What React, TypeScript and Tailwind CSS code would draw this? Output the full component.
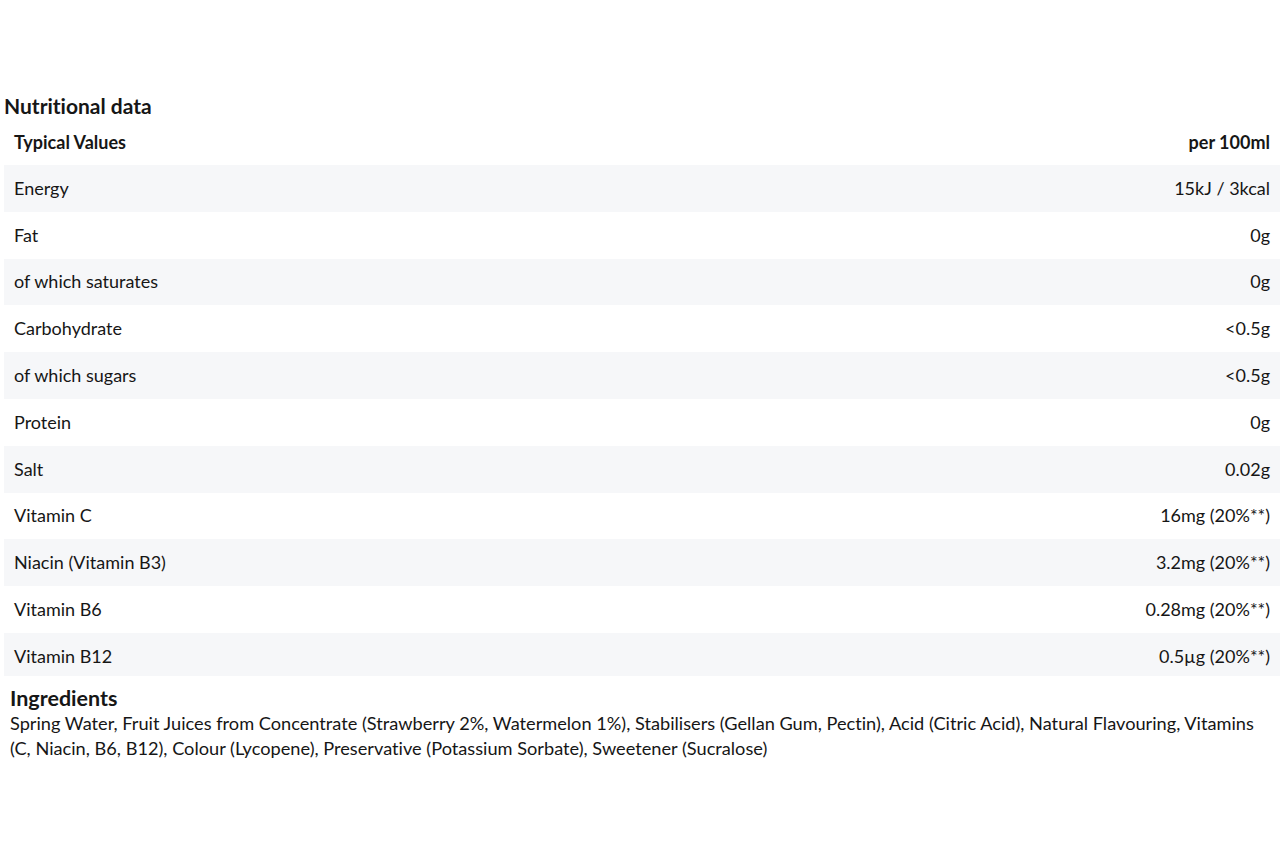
import React from "react";

const rows: [string, string][] = [
  ["Energy", "15kJ / 3kcal"],
  ["Fat", "0g"],
  ["of which saturates", "0g"],
  ["Carbohydrate", "<0.5g"],
  ["of which sugars", "<0.5g"],
  ["Protein", "0g"],
  ["Salt", "0.02g"],
  ["Vitamin C", "16mg (20%**)"],
  ["Niacin (Vitamin B3)", "3.2mg (20%**)"],
  ["Vitamin B6", "0.28mg (20%**)"],
  ["Vitamin B12", "0.5µg (20%**)"],
];

export default function App() {
  return (
    <div
      className="w-[1280px] h-[853px] bg-white text-[#161616] pt-[93px] [font-variant-ligatures:none]"
      style={{ fontFamily: "Lato, 'Noto Sans', sans-serif" }}
    >
      <div className="pl-[4px]">
        <h2 className="text-[21px] font-bold leading-[26px]">Nutritional data</h2>
        <table className="w-full border-collapse text-[18px]">
          <thead>
            <tr className="h-[46px]">
              <th className="text-left font-bold px-[10px] pt-[1px]">Typical Values</th>
              <th className="text-right font-bold px-[10px] pt-[1px]">per 100ml</th>
            </tr>
          </thead>
          <tbody>
            {rows.map(([k, v], i) => {
              const last = i === rows.length - 1;
              const bg = i % 2 === 0 ? "bg-[#f6f7f9]" : "bg-white";
              return (
                <tr key={k} className={last ? `h-[43px] ${bg}` : `h-[46.8px] ${bg}`}>
                  <td className={last ? "text-left px-[10px] pt-[4px]" : "text-left px-[10px]"}>{k}</td>
                  <td className={last ? "text-right px-[10px] pt-[4px]" : "text-right px-[10px]"}>{v}</td>
                </tr>
              );
            })}
          </tbody>
        </table>
      </div>
      <div className="pl-[10px] pr-[4px] pt-[9px]">
        <h3 className="text-[21.5px] font-bold leading-[26px]">Ingredients</h3>
        <p className="text-[18.2px] leading-[25px]">
          Spring Water, Fruit Juices from Concentrate (Strawberry 2%, Watermelon 1%), Stabilisers (Gellan Gum, Pectin), Acid (Citric Acid), Natural Flavouring, Vitamins (C, Niacin, B6, B12), Colour (Lycopene), Preservative (Potassium Sorbate), Sweetener (Sucralose)
        </p>
      </div>
    </div>
  );
}
